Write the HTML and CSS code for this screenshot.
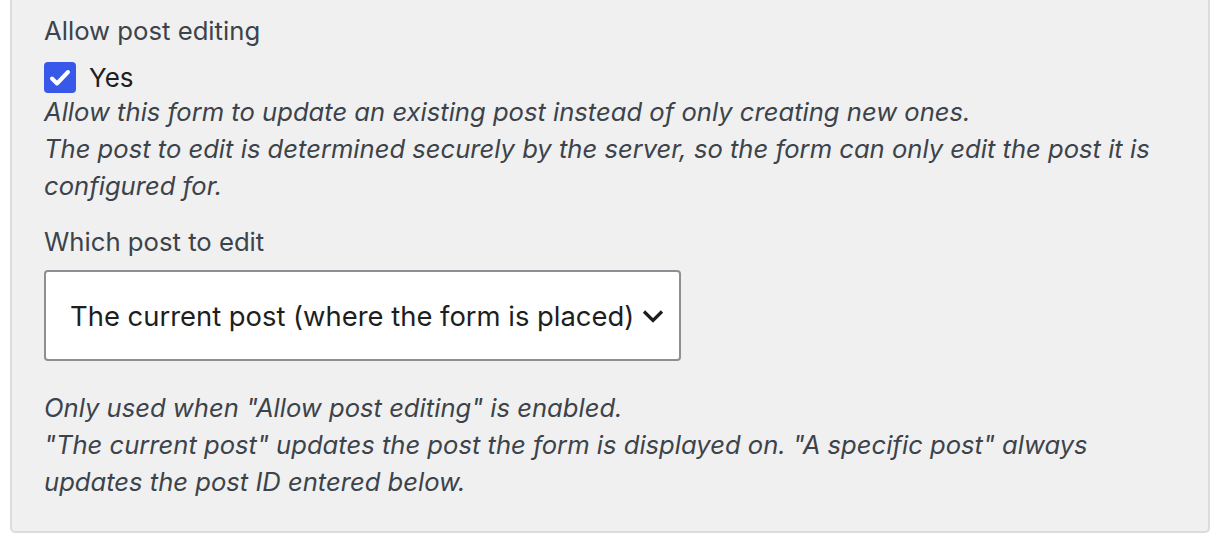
FILE: index.html
```html
<!DOCTYPE html>
<html>
<head>
  <title>Post editing settings</title>
  <link rel="stylesheet" href="styles.css">
</head>
<body>
  <div class="panel">
    <div class="field">
      <div class="field-label">Allow post editing</div>
      <label class="check">
        <span class="check-box">
          <svg width="24" height="24" viewBox="0 0 24 24"><path d="M4 12.5l5 5L20 6" fill="none" stroke="#fff" stroke-width="4" stroke-linecap="round" stroke-linejoin="round"/></svg>
        </span>
        <span class="check-text">Yes</span>
      </label>
      <p class="help">Allow this form to update an existing post instead of only creating new ones.<br>
        The post to edit is determined securely by the server, so the form can only edit the post it is configured for.</p>
    </div>

    <div class="field">
      <div class="field-label">Which post to edit</div>
      <div class="select">
        <span>The current post (where the form is placed)</span>
        <svg class="chevron" width="22" height="14" viewBox="0 0 22 14"><path d="M2 2.5l9 9 9-9" fill="none" stroke="#1e1e1e" stroke-width="3.2"/></svg>
      </div>
      <p class="help help-after-select">Only used when "Allow post editing" is enabled.<br>
        "The current post" updates the post the form is displayed on. "A specific post" always updates the post ID entered below.</p>
    </div>
  </div>
</body>
</html>
```

FILE: styles.css
```css
body {
  margin: 0;
  background: #fff;
  font-family: Inter, "Noto Sans", sans-serif;
}

.panel {
  margin: 0 10px 0 10px;
  height: 533px;
  box-sizing: border-box;
  background: #f0f0f0;
  border: 2px solid #dcdcde;
  border-top: none;
  border-radius: 0 0 5px 5px;
  padding: 15px 34px 0 32px;
}

.field-label {
  font-size: 25.7px;
  line-height: 32px;
  color: #3c434a;
}

.check {
  display: flex;
  align-items: center;
  gap: 13px;
  margin-top: 15px;
}

.check-box {
  width: 32px;
  height: 31px;
  border-radius: 4px;
  background: #3858e9;
  display: flex;
  align-items: center;
  justify-content: center;
}

.check-text {
  font-size: 26px;
  color: #1e1e1e;
}

.help {
  margin: 0;
  font-size: 25.6px;
  line-height: 37px;
  font-style: italic;
  color: #3c434a;
}

.field + .field {
  margin-top: 22px;
}

.select {
  margin-top: 12px;
  width: 637px;
  height: 91px;
  box-sizing: border-box;
  background: #fff;
  border: 2px solid #8c8f94;
  border-radius: 4px;
  display: flex;
  align-items: center;
  padding-left: 24px;
  gap: 8px;
  font-size: 27.4px;
  color: #1e1e1e;
}

.help-after-select {
  margin-top: 28px;
}
```
